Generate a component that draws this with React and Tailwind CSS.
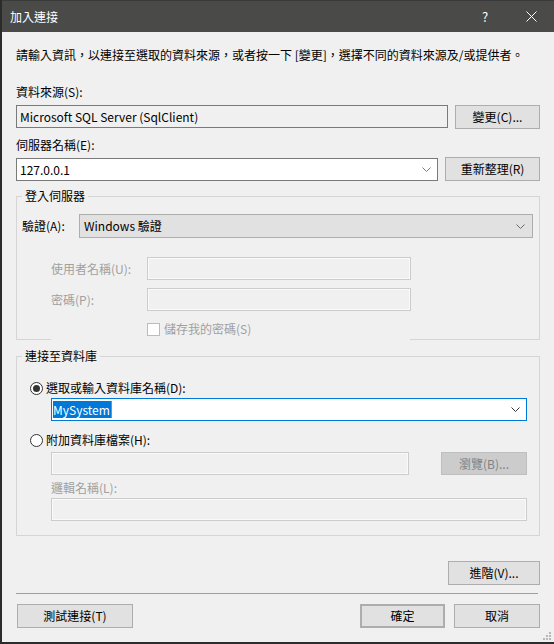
import React from 'react';

const Chevron = ({ className = '' }) => (
    <svg width="9" height="5" viewBox="0 0 9 5" className={className}>
        <path d="M0.5 0.5 L4.5 4.5 L8.5 0.5" fill="none" stroke="currentColor" strokeWidth="1" />
    </svg>
);

const Btn = ({ children, className = '' }) => (
    <button type="button" className={`h-[24px] bg-[#e1e1e1] border border-[#adadad] text-black flex items-center justify-center ${className}`}>
        {children}
    </button>
);

const Radio = ({ checked }) => (
    <span className="w-[13px] h-[13px] rounded-full border border-[#333333] bg-white flex items-center justify-center shrink-0">
        {checked && <span className="w-[7px] h-[7px] rounded-full bg-[#333333]" />}
    </span>
);

const DisabledBox = ({ className = '' }) => (
    <div className={`h-[23px] border border-[#cccccc] bg-[#f0f0f0] shadow-[inset_0_0_0_1px_#fafafa] ${className}`} />
);

export default function App() {
    return (
        <div className="w-[554px] h-[644px] flex flex-col bg-[#f0f0f0] border-l-2 border-b-2 border-[#2b2b2b] font-['Noto_Sans_CJK_TC','Noto_Sans',sans-serif] text-[12px] leading-[16px] text-black overflow-hidden">
            {/* title bar */}
            <div className="h-[32px] shrink-0 bg-[#4a4a48] border-t border-[#3a3a3a] flex items-center text-white">
                <span className="pl-[8px] text-[12px]">加入連接</span>
                <div className="ml-auto flex h-full">
                    <div className="w-[46px] h-full flex items-center justify-center text-[13px]">?</div>
                    <div className="w-[46px] h-full flex items-center justify-center">
                        <svg width="11" height="11" viewBox="0 0 11 11">
                            <path d="M0.5 0.5 L10.5 10.5 M10.5 0.5 L0.5 10.5" stroke="#ffffff" strokeWidth="1" />
                        </svg>
                    </div>
                </div>
            </div>

            <div className="flex-1 relative flex flex-col px-[14px] pt-[15px]">
                <p className="whitespace-nowrap">請輸入資訊，以連接至選取的資料來源，或者按一下 [變更]，選擇不同的資料來源及/或提供者。</p>

                <div className="mt-[21px]">資料來源(S):</div>
                <div className="mt-[5px] flex items-start">
                    <div className="w-[432px] h-[23px] border border-[#7a7a7a] bg-[#f0f0f0] flex items-center px-[3px]">Microsoft SQL Server (SqlClient)</div>
                    <Btn className="ml-auto w-[85px]">變更(C)...</Btn>
                </div>

                <div className="mt-[8px]">伺服器名稱(E):</div>
                <div className="mt-[4px] flex items-start">
                    <div className="mt-[1px] w-[422px] h-[23px] border border-[#7a7a7a] bg-white flex items-center pl-[3px] pr-[6px]">
                        <span className="flex-1">127.0.0.1</span>
                        <Chevron className="text-[#7a7a7a]" />
                    </div>
                    <Btn className="ml-auto w-[95px]">重新整理(R)</Btn>
                </div>

                {/* login group */}
                <fieldset className="mt-[7px] border border-b-0 border-[#d5d5d5] pb-[2px]">
                    <legend className="ml-[5px] px-[3px]">登入伺服器</legend>
                    <div className="mt-[10px] flex items-center">
                        <span className="ml-[5px] w-[57px]">驗證(A):</span>
                        <div className="w-[454px] h-[24px] border border-[#adadad] bg-[#e1e1e1] flex items-center pl-[4px] pr-[7px]">
                            <span className="flex-1">Windows 驗證</span>
                            <Chevron className="text-[#6a6a6a]" />
                        </div>
                    </div>
                    <div className="mt-[19px] flex items-center text-[#a0a0a0]">
                        <span className="ml-[34px] w-[96px]">使用者名稱(U):</span>
                        <DisabledBox className="w-[264px]" />
                    </div>
                    <div className="mt-[8px] flex items-center text-[#a0a0a0]">
                        <span className="ml-[34px] w-[96px]">密碼(P):</span>
                        <DisabledBox className="w-[264px]" />
                    </div>
                    <div className="mt-[10px] h-[16px] flex items-center text-[#a0a0a0]">
                        <span className="ml-[130px] w-[13px] h-[13px] border border-[#bcbcbc] bg-white" />
                        <span className="ml-[4px]">儲存我的密碼(S)</span>
                    </div>
                </fieldset>
                <div className="flex h-px">
                    <div className="w-[35px] bg-[#d5d5d5]" />
                    <div className="w-[359px]" />
                    <div className="flex-1 bg-[#d5d5d5]" />
                </div>

                {/* database group */}
                <fieldset className="mt-[8px] border border-[#d5d5d5] pb-[14px]">
                    <legend className="ml-[5px] px-[3px]">連接至資料庫</legend>
                    <div className="mt-[16px] h-[16px] flex items-center">
                        <span className="ml-[13px]"><Radio checked /></span>
                        <span className="ml-[3px]">選取或輸入資料庫名稱(D):</span>
                    </div>
                    <div className="mt-[2px] ml-[34px] w-[476px] h-[23px] border border-[#0078d7] bg-white flex items-center pl-[1px] pr-[6px]">
                        <span className="flex-1">
                            <span className="bg-[#0078d7] text-white pr-[1px] border-r border-[#d07b30]">MySystem</span>
                        </span>
                        <Chevron className="text-[#333333]" />
                    </div>
                    <div className="mt-[11px] h-[16px] flex items-center">
                        <span className="ml-[13px]"><Radio /></span>
                        <span className="ml-[3px]">附加資料庫檔案(H):</span>
                    </div>
                    <div className="mt-[4px] ml-[34px] flex items-start">
                        <DisabledBox className="w-[358px]" />
                        <button type="button" className="ml-[32px] w-[86px] h-[23px] bg-[#cccccc] border border-[#bfbfbf] text-[#838383] flex items-center justify-center">瀏覽(B)...</button>
                    </div>
                    <div className="mt-[5px] ml-[34px] text-[#a0a0a0]">邏輯名稱(L):</div>
                    <DisabledBox className="mt-[2px] ml-[34px] w-[476px]" />
                </fieldset>

                <div className="mt-[25px] flex justify-end">
                    <Btn className="w-[92px]">進階(V)...</Btn>
                </div>

                <div className="mt-[8px] mr-[2px] h-px bg-[#a0a0a0]" />

                <div className="mt-[10px] flex items-start">
                    <Btn className="ml-[1px] w-[116px]">測試連接(T)</Btn>
                    <Btn className="ml-auto w-[85px] border-2 border-[#0078d7]">確定</Btn>
                    <Btn className="ml-[9px] w-[86px]">取消</Btn>
                </div>

                <svg width="9" height="9" viewBox="0 0 9 9" className="absolute right-[2px] bottom-[1px]">
                    <rect x="6" y="0" width="2" height="2" fill="#b8b8b8" />
                    <rect x="3" y="3" width="2" height="2" fill="#b8b8b8" />
                    <rect x="6" y="3" width="2" height="2" fill="#b8b8b8" />
                    <rect x="0" y="6" width="2" height="2" fill="#b8b8b8" />
                    <rect x="3" y="6" width="2" height="2" fill="#b8b8b8" />
                    <rect x="6" y="6" width="2" height="2" fill="#b8b8b8" />
                </svg>
            </div>
        </div>
    );
}
